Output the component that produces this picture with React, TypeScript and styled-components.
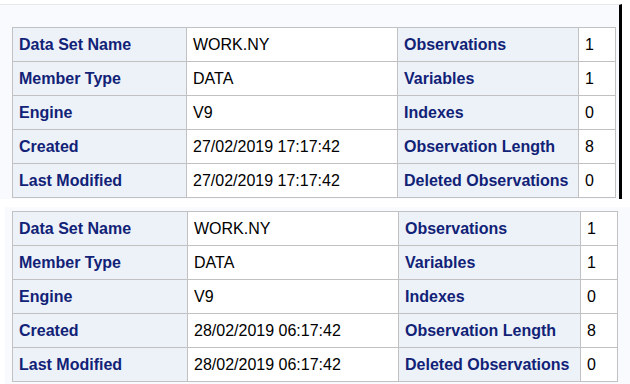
import styled, { createGlobalStyle } from "styled-components"

const GlobalStyle = createGlobalStyle`
    html, body {
        margin: 0;
        padding: 0;
        background: #ffffff;
    }
    body {
        width: 630px;
        height: 384px;
        overflow: hidden;
        font-family: "Liberation Sans", Arial, sans-serif;
    }
`

type Row = [string, string, string, string]

const firstRun: Row[] = [
    ["Data Set Name", "WORK.NY", "Observations", "1"],
    ["Member Type", "DATA", "Variables", "1"],
    ["Engine", "V9", "Indexes", "0"],
    ["Created", "27/02/2019 17:17:42", "Observation Length", "8"],
    ["Last Modified", "27/02/2019 17:17:42", "Deleted Observations", "0"],
]

const secondRun: Row[] = [
    ["Data Set Name", "WORK.NY", "Observations", "1"],
    ["Member Type", "DATA", "Variables", "1"],
    ["Engine", "V9", "Indexes", "0"],
    ["Created", "28/02/2019 06:17:42", "Observation Length", "8"],
    ["Last Modified", "28/02/2019 06:17:42", "Deleted Observations", "0"],
]

const AttrTable = ({ rows, cols }: { rows: Row[]; cols: number[] }) => {
    return (
        <Table>
            <colgroup>
                {cols.map((w, i) => <col key={i} style={{ width: w }} />)}
            </colgroup>
            <tbody>
                {rows.map((r) => (
                    <tr key={r[0]}>
                        <Header>{r[0]}</Header>
                        <Data>{r[1]}</Data>
                        <Header>{r[2]}</Header>
                        <Data>{r[3]}</Data>
                    </tr>
                ))}
            </tbody>
        </Table>
    )
}

export default function App() {
    return (
        <>
            <GlobalStyle />
            <Page>
                <TopShot>
                    <AttrTable rows={firstRun} cols={[174, 211, 181, 37]} />
                </TopShot>
                <BottomShot>
                    <AttrTable rows={secondRun} cols={[175, 211, 182, 37]} />
                </BottomShot>
            </Page>
        </>
    )
}

const Page = styled.div`
    display: flex;
    flex-direction: column;
    padding-top: 4px;
`

const TopShot = styled.div`
    width: 622px;
    height: 195px;
    box-sizing: border-box;
    background: #f9fafd;
    border-top: 1px solid #e6e8ee;
    border-right: 3px solid #000;
    padding: 22px 0 0 12px;
`

const BottomShot = styled.div`
    margin: 8px 0 0 5px;
    height: 177px;
    box-sizing: border-box;
    background: #f9fafd;
    padding: 4px 0 0 7px;
`

const Table = styled.table`
    border-collapse: collapse;
    table-layout: fixed;
    border: 1px solid #c1c1c1;
    font-size: 16px;
`

const Cell = styled.td`
    height: 34px;
    padding: 0 6px;
    border: 1px solid #c1c1c1;
    white-space: nowrap;
    box-sizing: border-box;
    vertical-align: middle;
`

const Header = styled(Cell)`
    background: #edf2f9;
    color: #112277;
    font-weight: bold;
`

const Data = styled(Cell)`
    background: #ffffff;
    color: #000000;
`
